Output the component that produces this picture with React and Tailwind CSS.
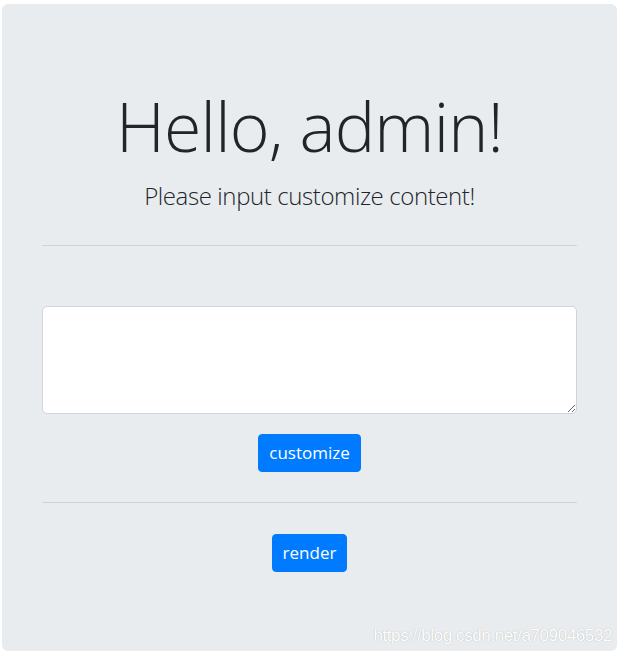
const App = () => {
  return (
    <div className="min-h-[653px] bg-white pt-[4px] pl-[2px] pr-[4px] pb-[2px] font-['Open_Sans',sans-serif] text-[#212529]">
      <div className="relative h-[647px] rounded-[6px] bg-[#e9ecef] px-[40px] pt-[80px]">
        <h1 className="text-center text-[68px] leading-[84px] font-light tracking-[-0.8px]">Hello, admin!</h1>
        <p className="mt-[9px] text-center text-[24px] leading-[37.5px] font-light tracking-[-0.4px]">
          Please input customize content!
        </p>
        <hr className="my-[30px] border-t border-black/10" />

        <div className="pt-[30px]">
          <textarea className="block h-[108px] w-full rounded-[5px] border border-[#ced4da] bg-white px-[15px] py-[7px] text-[20px] outline-none" />
          <div className="mt-[20px] flex justify-center">
            <button className="h-[38px] rounded-[4px] border border-[#007bff] bg-[#007bff] px-[10px] text-[17px] leading-[26px] text-white">
              customize
            </button>
          </div>
        </div>

        <hr className="mt-[30px] border-t border-black/10" />

        <div className="mt-[31px] flex justify-center">
          <button className="h-[38px] rounded-[4px] border border-[#007bff] bg-[#007bff] px-[10px] text-[17px] leading-[26px] text-white">
            render
          </button>
        </div>

        <span className="absolute right-[5px] bottom-[5px] font-['Liberation_Sans',sans-serif] text-[17px] leading-[20px] tracking-[-0.4px] text-white [text-shadow:0_0_1px_rgba(0,0,0,0.3)]">
          https://blog.csdn.net/a709046532
        </span>
      </div>
    </div>
  );
};

export default App;
